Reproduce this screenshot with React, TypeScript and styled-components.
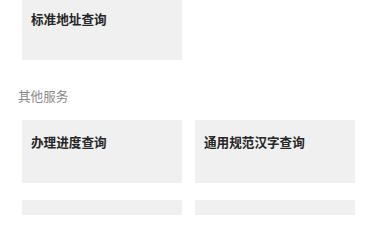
import React from "react";
import styled, { createGlobalStyle } from "styled-components";

const Global = createGlobalStyle`
  html, body { margin: 0; padding: 0; background: #ffffff; }
  body { width: 380px; height: 215px; overflow: hidden; font-family: "Noto Sans CJK SC", "Noto Sans", sans-serif; }
`;

const Page = styled.div`
  width: 380px;
  height: 215px;
  overflow: hidden;
  box-sizing: border-box;
  padding: 0 25px 0 22px;
  background: #ffffff;
`;

const Scroller = styled.div`
  margin-top: -3.5px;
  display: flex;
  flex-direction: column;
`;

const Grid = styled.div`
  display: grid;
  grid-template-columns: 160px 160px;
  column-gap: 13px;
  row-gap: 17px;
`;

const Card = styled.div`
  height: 63px;
  box-sizing: border-box;
  padding: 13px 0 0 9px;
  background: #f0f0f0;
  font-size: 12.6px;
  line-height: 17px;
  font-weight: 700;
  color: #262626;
  letter-spacing: 0;
`;

const SectionTitle = styled.div`
  margin: 27.5px 0 16px -4px;
  font-size: 12.6px;
  line-height: 17px;
  color: #8a8a8a;
`;

const top = ["标准地址查询"];
const others = ["办理进度查询", "通用规范汉字查询", "", ""];

export default function App() {
  return (
    <Page>
      <Global />
      <Scroller>
        <Grid>
          {top.map((t) => (
            <Card key={t}>{t}</Card>
          ))}
        </Grid>
        <SectionTitle>其他服务</SectionTitle>
        <Grid>
          {others.map((t, i) => (
            <Card key={i}>{t}</Card>
          ))}
        </Grid>
      </Scroller>
    </Page>
  );
}
